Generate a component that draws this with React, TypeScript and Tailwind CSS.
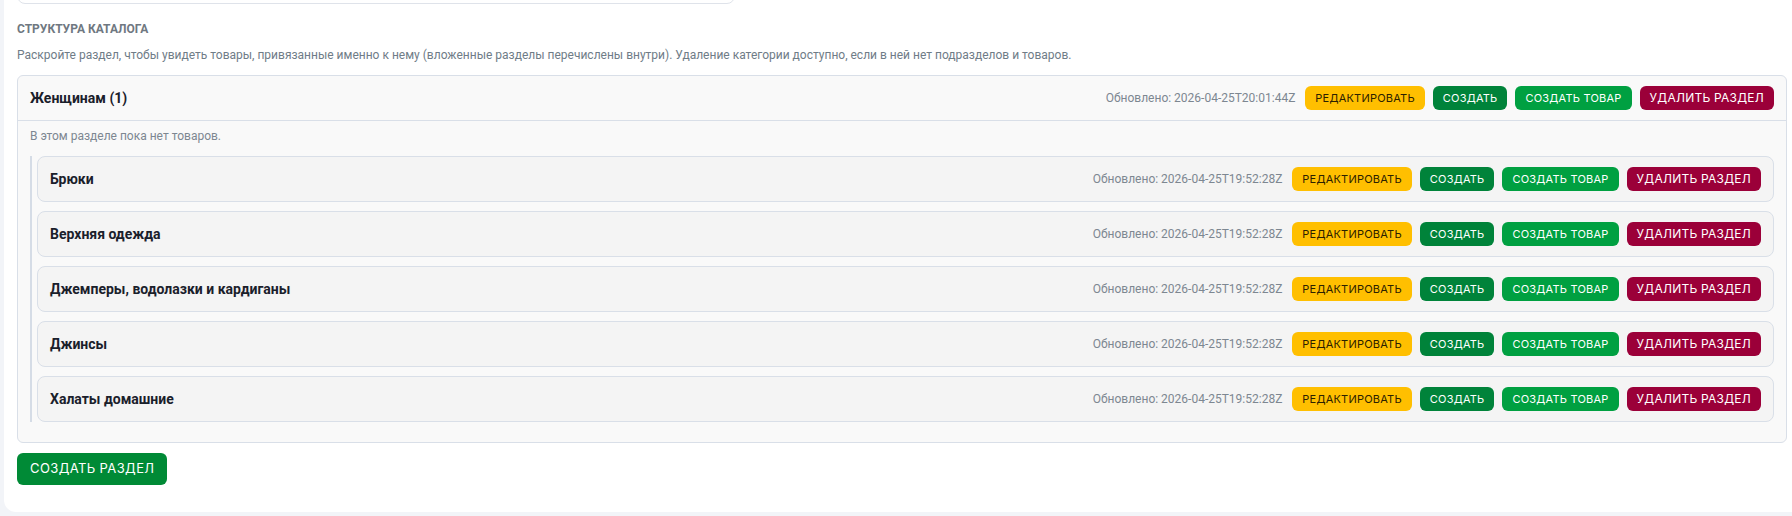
import React from "react"

type Section = { id: string; name: string; updatedAt: string }

const children: Section[] = [
  { id: "1", name: "Брюки", updatedAt: "2026-04-25T19:52:28Z" },
  { id: "2", name: "Верхняя одежда", updatedAt: "2026-04-25T19:52:28Z" },
  { id: "3", name: "Джемперы, водолазки и кардиганы", updatedAt: "2026-04-25T19:52:28Z" },
  { id: "4", name: "Джинсы", updatedAt: "2026-04-25T19:52:28Z" },
  { id: "5", name: "Халаты домашние", updatedAt: "2026-04-25T19:52:28Z" },
]

const btnFont = { fontFamily: "Inter, 'Noto Sans', sans-serif" }

function Actions({ updatedAt }: { updatedAt: string }) {
  return (
    <div className="flex items-center gap-2">
      <span className="mr-0.5 text-xs text-[#7d8791]">Обновлено: {updatedAt}</span>
      <button style={btnFont} className="h-6 rounded-md bg-[#ffbf00] px-2.5 text-[11px] tracking-[0.02em] text-[#2b2100]">
        РЕДАКТИРОВАТЬ
      </button>
      <button style={btnFont} className="h-6 rounded-md bg-[#00833a] px-2.5 text-[11px] tracking-[0.02em] text-white">
        СОЗДАТЬ
      </button>
      <button style={btnFont} className="h-6 rounded-md bg-[#00a041] px-2.5 text-[11px] tracking-[0.02em] text-white">
        СОЗДАТЬ ТОВАР
      </button>
      <button style={btnFont} className="h-6 rounded-md bg-[#9b0039] px-2.5 text-[12px] tracking-[0.02em] text-white">
        УДАЛИТЬ РАЗДЕЛ
      </button>
    </div>
  )
}

export default function App() {
  return (
    <div className="h-[516px] overflow-hidden bg-[#f2f4f8]" style={{ fontFamily: "Roboto, 'Liberation Sans', sans-serif" }}>
      <div className="ml-1 flow-root h-[512px] rounded-bl-xl bg-white pl-[13px] pr-[5px]">
        {/* cut-off field above */}
        <div className="-mt-[30px] h-[34px] w-[718px] rounded-b-lg border border-[#dfe3ea] bg-white" />

        <h2 className="mt-[17px] text-xs font-bold uppercase text-[#6f7881]">Структура каталога</h2>
        <p className="mt-[10px] text-xs text-[#6f7c87]">
          Раскройте раздел, чтобы увидеть товары, привязанные именно к нему (вложенные разделы перечислены внутри). Удаление категории доступно, если в ней нет подразделов и товаров.
        </p>

        <div className="mt-[12px] rounded-md border border-[#d9dfe8] bg-[#f9f9f9]">
          <div className="flex h-[45px] items-center justify-between border-b border-[#d9dfe8] px-3">
            <span className="text-sm font-bold text-[#1a202b]">Женщинам (1)</span>
            <Actions updatedAt="2026-04-25T20:01:44Z" />
          </div>
          <div className="px-3 pb-5 pt-[7px]">
            <p className="text-xs text-[#7d8791]">В этом разделе пока нет товаров.</p>
            <div className="mt-[12px] flex flex-col gap-[9px] border-l-2 border-[#d5dce6] pl-[5px]">
              {children.map(c => (
                <div
                  key={c.id}
                  className="flex h-[46px] items-center justify-between rounded-lg border border-[#d9dfe8] bg-[#f4f4f4] pl-3 pr-3"
                >
                  <span className="text-sm font-bold text-[#1a202b]">{c.name}</span>
                  <Actions updatedAt={c.updatedAt} />
                </div>
              ))}
            </div>
          </div>
        </div>

        <button
          style={btnFont}
          className="mt-[10px] h-8 rounded-md bg-[#008a36] px-[13px] text-[13px] tracking-[0.03em] text-white"
        >
          СОЗДАТЬ РАЗДЕЛ
        </button>
      </div>
    </div>
  )
}
